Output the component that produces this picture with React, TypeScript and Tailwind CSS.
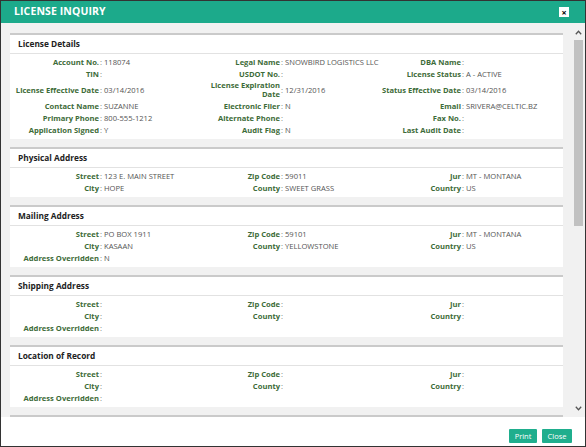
import React from "react";

type Cell = { label: string; value?: string } | null;

const sections: { title: string; rows: Cell[][] }[] = [
  {
    title: "License Details",
    rows: [
      [
        { label: "Account No.", value: "118074" },
        { label: "Legal Name", value: "SNOWBIRD LOGISTICS LLC" },
        { label: "DBA Name" },
      ],
      [{ label: "TIN" }, { label: "USDOT No." }, { label: "License Status", value: "A - ACTIVE" }],
      [
        { label: "License Effective Date", value: "03/14/2016" },
        { label: "License Expiration\nDate", value: "12/31/2016" },
        { label: "Status Effective Date", value: "03/14/2016" },
      ],
      [
        { label: "Contact Name", value: "SUZANNE" },
        { label: "Electronic Filer", value: "N" },
        { label: "Email", value: "SRIVERA@CELTIC.BZ" },
      ],
      [
        { label: "Primary Phone", value: "800-555-1212" },
        { label: "Alternate Phone" },
        { label: "Fax No." },
      ],
      [
        { label: "Application Signed", value: "Y" },
        { label: "Audit Flag", value: "N" },
        { label: "Last Audit Date" },
      ],
    ],
  },
  {
    title: "Physical Address",
    rows: [
      [
        { label: "Street", value: "123 E. MAIN STREET" },
        { label: "Zip Code", value: "59011" },
        { label: "Jur", value: "MT - MONTANA" },
      ],
      [
        { label: "City", value: "HOPE" },
        { label: "County", value: "SWEET GRASS" },
        { label: "Country", value: "US" },
      ],
    ],
  },
  {
    title: "Mailing Address",
    rows: [
      [
        { label: "Street", value: "PO BOX 1911" },
        { label: "Zip Code", value: "59101" },
        { label: "Jur", value: "MT - MONTANA" },
      ],
      [
        { label: "City", value: "KASAAN" },
        { label: "County", value: "YELLOWSTONE" },
        { label: "Country", value: "US" },
      ],
      [{ label: "Address Overridden", value: "N" }, null, null],
    ],
  },
  {
    title: "Shipping Address",
    rows: [
      [{ label: "Street" }, { label: "Zip Code" }, { label: "Jur" }],
      [{ label: "City" }, { label: "County" }, { label: "Country" }],
      [{ label: "Address Overridden" }, null, null],
    ],
  },
  {
    title: "Location of Record",
    rows: [
      [{ label: "Street" }, { label: "Zip Code" }, { label: "Jur" }],
      [{ label: "City" }, { label: "County" }, { label: "Country" }],
      [{ label: "Address Overridden" }, null, null],
    ],
  },
];

function Field({ cell }: { cell: Cell }) {
  if (!cell) return <div />;
  return (
    <div className="flex items-center whitespace-nowrap">
      <span className="w-[86px] shrink-0 whitespace-pre-line text-right font-bold leading-[9px] text-[#3d6b38]">
        {cell.label}
      </span>
      <span className="ml-[1px] leading-[9px] text-[#777]">:</span>
      <span className="ml-[2px] leading-[9px] text-[#555]">{cell.value}</span>
    </div>
  );
}

function Chevron({ up }: { up?: boolean }) {
  return (
    <svg width="7" height="5" viewBox="0 0 7 5" className={up ? "" : "rotate-180"}>
      <path d="M0.8 4.2 L3.5 1.3 L6.2 4.2" fill="none" stroke="#555" strokeWidth="1.3" />
    </svg>
  );
}

export default function App() {
  return (
    <div className="flex h-[447px] w-[586px] flex-col overflow-hidden border border-[#333] bg-white font-['Open_Sans',sans-serif]">
      <header className="flex h-[22px] shrink-0 items-center justify-between bg-[#1caa8b] pl-[13px] pr-[16px]">
        <h1 className="text-[10.5px] font-bold tracking-[0.1px] text-white">LICENSE INQUIRY</h1>
        <button
          type="button"
          className="flex h-[10px] w-[10px] items-center justify-center bg-white text-[9px] font-bold leading-none text-black"
        >
          ×
        </button>
      </header>

      <div className="flex h-[394px] shrink-0">
        <div className="flex-1 overflow-hidden bg-[#f1f1f1] pl-[9px] pr-[8px] pt-[10px]">
          <div className="flex flex-col gap-[8px]">
            {sections.map((section) => (
              <section key={section.title} className="border-t-2 border-[#cacaca] bg-white">
                <h2 className="flex h-[18px] items-center pl-[8px] text-[8.3px] font-bold text-[#222]">
                  {section.title}
                </h2>
                <div className="border-t border-[#e2e2e2] pb-[3px] pt-[2px] text-[7.6px]">
                  {section.rows.map((row, i) => (
                    <div key={i} className="grid min-h-[12px] grid-cols-[181px_181px_181px] items-center py-[1px] pl-[3px]">
                      {row.map((cell, j) => (
                        <Field key={j} cell={cell} />
                      ))}
                    </div>
                  ))}
                </div>
              </section>
            ))}
            <div className="h-[20px] border-t-2 border-[#cacaca] bg-white" />
          </div>
        </div>

        <div className="flex w-[14px] shrink-0 flex-col items-center bg-[#f1f1f1]">
          <div className="flex h-[14px] items-center justify-center pt-[4px]">
            <Chevron up />
          </div>
          <div className="mt-[3px] h-[186px] w-[9px] bg-[#c1c1c1]" />
          <div className="flex-1" />
          <div className="flex h-[14px] items-center justify-center pb-[4px]">
            <Chevron />
          </div>
        </div>
      </div>

      <footer className="flex h-[29px] shrink-0 items-start justify-end gap-[5px] bg-white pr-[13px] pt-[12px]">
        <button type="button" className="h-[14px] w-[28px] rounded-[1px] bg-[#1fae8d] text-[7.5px] leading-[14px] text-white">
          Print
        </button>
        <button type="button" className="h-[14px] w-[30px] rounded-[1px] bg-[#1fae8d] text-[7.5px] leading-[14px] text-white">
          Close
        </button>
      </footer>
    </div>
  );
}
